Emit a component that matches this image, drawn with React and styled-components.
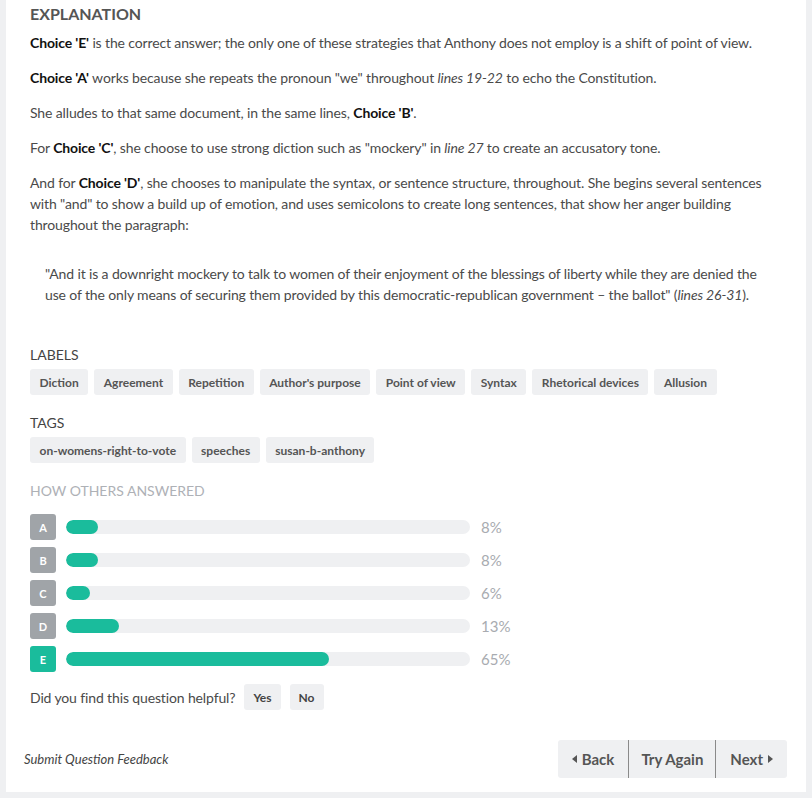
import React from "react";
import styled, { createGlobalStyle } from "styled-components";

const GlobalStyle = createGlobalStyle`
  body {
    margin: 0;
    background: #eff0f2;
    font-family: Lato, "Open Sans", sans-serif;
    color: #4a4a4a;
  }
`;

const Card = styled.div`
  margin-left: 6px;
  width: 800px;
  height: 792px;
  box-sizing: border-box;
  background: #fff;
  padding: 4px 19px 14px 24px;
  display: flex;
  flex-direction: column;
`;

const Body = styled.div`
  padding-left: 0;
`;

const Title = styled.h2`
  margin: 0 0 8px;
  font-size: 16px;
  line-height: 20px;
  font-weight: 700;
  color: #555;
`;

const Para = styled.p`
  margin: 0 0 14px;
  font-size: 14px;
  line-height: 21px;
  letter-spacing: -0.13px;
  b {
    color: #111;
    font-weight: 700;
  }
`;

const Quote = styled.blockquote`
  margin: 0;
  padding: 14px 15px;
  font-size: 14px;
  line-height: 21px;
  letter-spacing: -0.13px;
`;

const SectionHead = styled.div`
  margin-top: ${(p) => p.$top}px;
  font-size: 14px;
  line-height: 21px;
  color: ${(p) => (p.$light ? "#aeb1b6" : "#444")};
  text-transform: uppercase;
`;

const ChipRow = styled.div`
  display: flex;
  gap: 6px;
  margin-top: 4px;
`;

const Chip = styled.span`
  height: 26px;
  padding: 0 9.5px;
  display: flex;
  align-items: center;
  background: #eff0f2;
  border-radius: 3px;
  font-size: 12px;
  font-weight: 700;
  color: #555;
`;

const Answers = styled.div`
  margin-top: 13px;
  display: flex;
  flex-direction: column;
  gap: 7px;
`;

const AnswerRow = styled.div`
  display: flex;
  align-items: center;
  height: 26px;
`;

const Letter = styled.span`
  width: 26px;
  height: 26px;
  border-radius: 3px;
  background: ${(p) => (p.$correct ? "#1abc9c" : "#a0a4a8")};
  color: #fff;
  font-size: 11px;
  font-weight: 700;
  display: flex;
  align-items: center;
  justify-content: center;
`;

const Track = styled.div`
  margin-left: 10px;
  width: 404px;
  height: 14px;
  border-radius: 7px;
  background: #eff0f2;
  overflow: hidden;
`;

const Fill = styled.div`
  height: 100%;
  border-radius: 7px;
  background: #1abc9c;
`;

const Pct = styled.span`
  margin-left: 11px;
  font-size: 15px;
  color: #a8abb0;
`;

const Helpful = styled.div`
  margin-top: 12px;
  display: flex;
  align-items: center;
  gap: 9px;
  font-size: 14px;
  letter-spacing: -0.13px;
`;

const SmallBtn = styled.button`
  height: 26px;
  padding: 0 ${(p) => p.$pad}px;
  border: none;
  border-radius: 3px;
  background: #eff0f2;
  font-family: inherit;
  font-size: 12px;
  font-weight: 700;
  color: #444;
`;

const Footer = styled.div`
  margin-top: auto;
  margin-left: -6px;
  display: flex;
  align-items: center;
  justify-content: space-between;
`;

const Feedback = styled.a`
  font-size: 13px;
  font-style: italic;
  color: #444;
`;

const NavGroup = styled.div`
  display: flex;
  height: 38px;
  background: #eff0f2;
  border-radius: 3px;
`;

const NavBtn = styled.button`
  display: flex;
  align-items: center;
  gap: 5px;
  padding: 0 ${(p) => p.$pad}px;
  border: none;
  border-left: ${(p) => (p.$sep ? "1px solid #8a8a8a" : "none")};
  background: transparent;
  font-family: inherit;
  font-size: 15px;
  font-weight: 700;
  color: #555;
`;

const Arrow = ({ dir }) => (
  <svg width="5" height="8" viewBox="0 0 5 8">
    <path d={dir === "left" ? "M5 0 L0 4 L5 8 Z" : "M0 0 L5 4 L0 8 Z"} fill="#555" />
  </svg>
);

const labels = [
  "Diction",
  "Agreement",
  "Repetition",
  "Author's purpose",
  "Point of view",
  "Syntax",
  "Rhetorical devices",
  "Allusion",
];
const tags = ["on-womens-right-to-vote", "speeches", "susan-b-anthony"];
const answers = [
  { l: "A", p: 8 },
  { l: "B", p: 8 },
  { l: "C", p: 6 },
  { l: "D", p: 13 },
  { l: "E", p: 65, correct: true },
];

export default function App() {
  return (
    <>
      <GlobalStyle />
      <Card>
        <Body>
          <Title>EXPLANATION</Title>
          <Para>
            <b>Choice 'E'</b> is the correct answer; the only one of these strategies that Anthony does
            not employ is a shift of point of view.
          </Para>
          <Para>
            <b>Choice 'A'</b> works because she repeats the pronoun "we" throughout <i>lines 19-22</i> to
            echo the Constitution.
          </Para>
          <Para>
            She alludes to that same document, in the same lines, <b>Choice 'B'</b>.
          </Para>
          <Para>
            For <b>Choice 'C'</b>, she choose to use strong diction such as "mockery" in <i>line 27</i> to
            create an accusatory tone.
          </Para>
          <Para>
            And for <b>Choice 'D'</b>, she chooses to manipulate the syntax, or sentence structure,
            throughout. She begins several sentences with "and" to show a build up of emotion, and uses
            semicolons to create long sentences, that show her anger building throughout the paragraph:
          </Para>
          <Quote>
            "And it is a downright mockery to talk to women of their enjoyment of the blessings of liberty
            while they are denied the use of the only means of securing them provided by this
            democratic-republican government – the ballot" (<i>lines 26-31</i>).
          </Quote>

          <SectionHead $top={25}>Labels</SectionHead>
          <ChipRow>
            {labels.map((t) => (
              <Chip key={t}>{t}</Chip>
            ))}
          </ChipRow>

          <SectionHead $top={17}>Tags</SectionHead>
          <ChipRow>
            {tags.map((t) => (
              <Chip key={t}>{t}</Chip>
            ))}
          </ChipRow>

          <SectionHead $top={17} $light>
            How others answered
          </SectionHead>
          <Answers>
            {answers.map((a) => (
              <AnswerRow key={a.l}>
                <Letter $correct={a.correct}>{a.l}</Letter>
                <Track>
                  <Fill style={{ width: `${a.p}%` }} />
                </Track>
                <Pct>{a.p}%</Pct>
              </AnswerRow>
            ))}
          </Answers>

          <Helpful>
            <span>Did you find this question helpful?</span>
            <SmallBtn $pad={9}>Yes</SmallBtn>
            <SmallBtn $pad={9}>No</SmallBtn>
          </Helpful>
        </Body>

        <Footer>
          <Feedback>Submit Question Feedback</Feedback>
          <NavGroup>
            <NavBtn $pad={14}>
              <Arrow dir="left" />
              Back
            </NavBtn>
            <NavBtn $pad={12} $sep>
              Try Again
            </NavBtn>
            <NavBtn $pad={14} $sep>
              Next
              <Arrow dir="right" />
            </NavBtn>
          </NavGroup>
        </Footer>
      </Card>
    </>
  );
}
